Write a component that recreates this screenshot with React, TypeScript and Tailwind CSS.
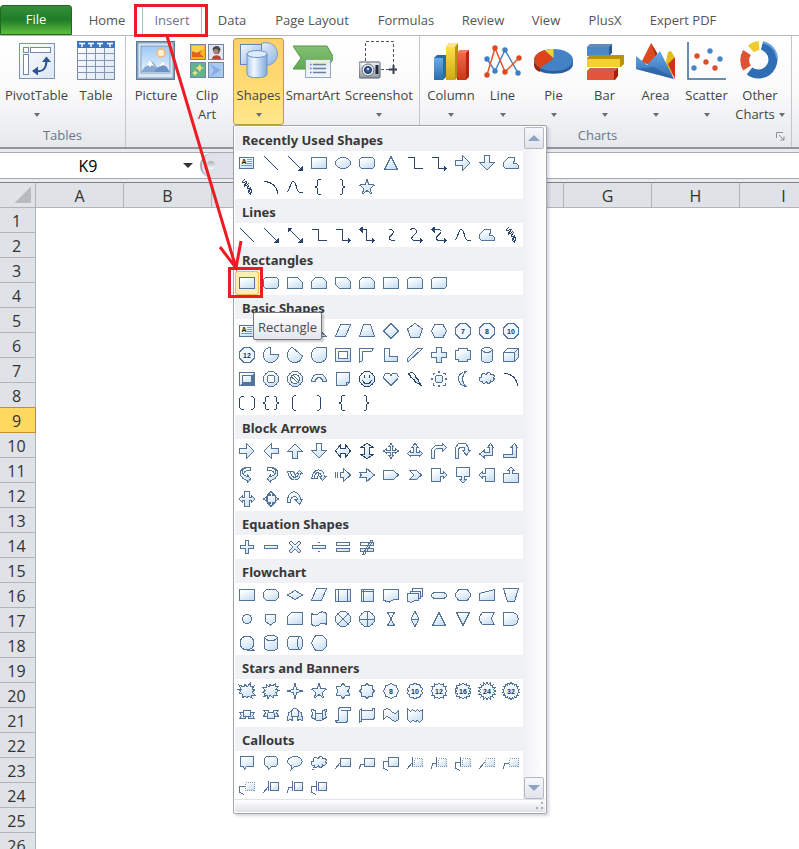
import React from 'react';

/* ---------- geometry helpers for the 24 x 24 shape thumbnails ---------- */

function starPath(points: number, outer: number, inner: number, cx = 12, cy = 12): string {
  let d = '';
  for (let i = 0; i < points * 2; i++) {
    const r = i % 2 === 0 ? outer : inner;
    const a = (Math.PI * i) / points - Math.PI / 2;
    d += `${i === 0 ? 'M' : 'L'}${(cx + r * Math.cos(a)).toFixed(2)} ${(cy + r * Math.sin(a)).toFixed(2)}`;
  }
  return d + 'z';
}

function circlePath(r: number, cx = 12, cy = 12, ry = r): string {
  return `M${cx - r} ${cy}a${r} ${ry} 0 1 0 ${r * 2} 0a${r} ${ry} 0 1 0 ${-r * 2} 0z`;
}

type Shape = {
  name: string;
  d?: string;
  line?: string;
  solid?: string;
  text?: string;
  dark?: boolean;
};

const s = (name: string, d: string, line?: string, more: Partial<Shape> = {}): Shape => ({ name, d, line, ...more });
const l = (name: string, line: string, solid?: string): Shape => ({ name, line, solid, dark: true });

const RECT = 'M4.5 6.5h15v11h-15z';
const ROUND = 'M6.5 6.5h11l2 2v7l-2 2h-11l-2-2v-7z';
const OCTAGON = 'M9 4.5h6l4.500 4.500v6l-4.500 4.500h-6l-4.500-4.500v-6z';
const CLOUD =
  'M7.500 14.500c-4 1-4-4-1-4.500c-1-4 3-4 4.500-2.500c2-3 4-2 5 0c4 0 4 2 2.500 3c2 3-1 4-3 3.500c0 3-3 3-4 1c-2 2-4 2-4-.5z';
const HEAD_RIGHT = 'M17 14.500l3.500 3l-3.500 3z';
const HEAD_LEFT = 'M7.500 3.500l-3.500 3l3.500 3z';
const SCRIBBLE =
  'M9.500 4.500c-2 2-3 3-1.500 3.500s3-3 4-1.500s-4 3.500-2.500 4.500s3.500-3.500 4.500-2s-3 3.500-1.500 4.500s3-2 3.500-.5s-3 2-2.500 4s3 1 3-1s-3-2-2 0s1 2 1 3.500';
const FREEFORM = 'M9.500 6.500h6v4h-1.500v2h3.500l2 2v3h-13l-2-2v-4z';

const textBox: Shape = {
  name: 'Text Box',
  d: 'M4.500 6.500h14v11h-14z',
  line: 'M12 8.500h5M12 10.500h5M12 12.500h5M6 14.500h11',
  text: 'box',
};
const line = l('Line', 'M5 5L19 19');
const arrow = l('Arrow', 'M5 5L18 18', 'M19.500 19.500v-5l-5 5z');
const doubleArrow = l('Double Arrow', 'M6 6L18 18', 'M19.500 19.500v-5l-5 5zM4.500 4.500v5l5-5z');
const elbow = l('Elbow Connector', 'M4.500 6.500h7v11h8');
const elbowArrow = l('Elbow Arrow Connector', 'M4.500 6.500h7v11h6', HEAD_RIGHT);
const elbowDouble = l('Elbow Double-Arrow Connector', 'M7 6.500h4.500v11h6', HEAD_RIGHT + HEAD_LEFT);
const curve = l('Curve', 'M4 16.500c3 0 3-10 6-10c4 0 3 11 7 11h3');
const arc = l('Arc', 'M5 6.500c7 0 12 4 14 12');
const leftBrace = l('Left Brace', 'M13.500 4.500h-2l-1 1v5l-2 1.500l2 1.500v5l1 1h2');
const rightBrace = l('Right Brace', 'M8.500 4.500h2l1 1v5l2 1.500l-2 1.500v5l-1 1h-2');
const freeform = s('Freeform', FREEFORM);
const scribble = l('Scribble', SCRIBBLE);
const rightArrow = s('Right Arrow', 'M4.500 9.500h7v-5l7.500 7.500l-7.500 7.500v-5h-7z');
const downArrow = s('Down Arrow', 'M9.500 4.500h5v7h5l-7.500 7.500l-7.500-7.500h5z');
const star5 = s('5-Point Star', starPath(5, 8, 3.2, 12, 12.5));
const rectangle = s('Rectangle', RECT);
const rounded = s('Rounded Rectangle', ROUND);
const triangle = s('Isosceles Triangle', 'M12 5.500l6.500 13h-13z');

const curly = 'M7.500 6.500c5-3 8 2 4 5c-4 3-3 6 1 6';

const sections: { title: string; shapes: Shape[] }[] = [
  {
    title: 'Recently Used Shapes',
    shapes: [
      textBox, line, arrow, rectangle, s('Oval', circlePath(7.5, 12, 12, 5.5)), rounded, triangle, elbow, elbowArrow,
      rightArrow, downArrow, freeform, scribble, arc, curve, leftBrace, rightBrace, star5,
    ],
  },
  {
    title: 'Lines',
    shapes: [
      line, arrow, doubleArrow, elbow, elbowArrow, elbowDouble,
      l('Curved Connector', 'M9.500 6.500c6 0 6 3 3 5.500c-4 3-3 5.500 3 5.500'),
      l('Curved Arrow Connector', curly + 'h4', HEAD_RIGHT),
      l('Curved Double-Arrow Connector', 'M7 6.500c7-1 9 2 5 5c-4 3-3 6 1 6h4', HEAD_RIGHT + HEAD_LEFT),
      curve, freeform, scribble,
    ],
  },
  {
    title: 'Rectangles',
    shapes: [
      rectangle, rounded,
      s('Snip Single Corner Rectangle', 'M4.500 6.500h10l5 5v6h-15z'),
      s('Snip Same Side Corner Rectangle', 'M8.500 6.500h7l4 4v7h-15v-7z'),
      s('Snip Diagonal Corner Rectangle', 'M4.500 6.500h11l4 4v7h-11l-4-4z'),
      s('Snip and Round Single Corner Rectangle', 'M7.500 6.500h8l4 4v7h-15v-8z'),
      s('Round Single Corner Rectangle', 'M4.500 6.500h13l2 2v9h-15z'),
      s('Round Same Side Corner Rectangle', 'M6.500 6.500h11l2 2v9h-15v-9z'),
      s('Round Diagonal Corner Rectangle', 'M6.500 6.500h13v9l-2 2h-13v-9z'),
    ],
  },
  {
    title: 'Basic Shapes',
    shapes: [
      textBox, s('Oval', circlePath(7.5, 12, 12, 5.5)), triangle, s('Right Triangle', 'M5.500 5.500l14 12h-14z'),
      s('Parallelogram', 'M9.500 5.500h10l-5 12h-10z'),
      s('Trapezoid', 'M8.500 5.500h7l4 12h-15z'),
      s('Diamond', 'M12 4.500l7.500 7.500l-7.500 7.500l-7.500-7.500z'),
      s('Regular Pentagon', 'M12 4.500l7.500 5.500l-3 8.500h-9l-3-8.500z'),
      s('Hexagon', 'M8 5.500h8l3.500 6.500l-3.500 6.500h-8l-3.500-6.500z'),
      s('Heptagon', OCTAGON, undefined, { text: '7' }),
      s('Octagon', OCTAGON, undefined, { text: '8' }),
      s('Decagon', OCTAGON, undefined, { text: '10' }),
      s('Dodecagon', OCTAGON, undefined, { text: '12' }),
      s('Pie', 'M11.500 4.500v7h8c0 5-4 8-8 8s-7-3-7-7.500s3-7.500 7-7.500z'),
      s('Chord', 'M9.500 4.500l10 8.500c-1 4-4 6.500-8 6.500s-7-3-7-7.500c0-3 2-7 5-7.500z'),
      s('Teardrop', 'M19.500 4.500v8c0 4-3 7-7.500 7s-7.500-3-7.500-7.500s3-7.500 7.500-7.500z'),
      s('Frame', 'M4.500 5.500h15v13h-15zM7.500 8.500h9v7h-9z'),
      s('Half Frame', 'M4.500 5.500h14l-2 3h-9v9l-3 2z'),
      s('L-Shape', 'M5.500 5.500h5v8h8v5h-13z'),
      s('Diagonal Stripe', 'M14.500 5.500h5l-14 13h-1v-3z'),
      s('Cross', 'M9.500 4.500h5v5h5v5h-5v5h-5v-5h-5v-5h5z'),
      s('Plaque', 'M7.500 5.500h9v2h3v9h-3v2h-9v-2h-3v-9h3z'),
      s('Can', 'M6.500 6.500l3-2h5l3 2v11l-3 2h-5l-3-2z', 'M6.500 7l3 2h5l3-2'),
      s('Cube', 'M4.500 9.500l4-4h11v9l-4 4h-11z', 'M4.500 9.500h11v9M15.500 9.500l4-4'),
      s('Bevel', 'M4.500 5.500h15v13h-15z', 'M7.500 8.500h9v7h-9z', { solid: 'M20 5v14H4l3-3h10V8z' }),
      s('Donut', circlePath(7.5) + circlePath(4)),
      s('No Symbol', circlePath(7.5) + circlePath(4.5), 'M8 9.500l6.500 6M10 8l6 6'),
      s('Block Arc', 'M4.500 14.500c0-10 15-10 15 0h-4c0-5-7-5-7 0z'),
      s('Folded Corner', 'M5.500 5.500h13v10l-3 3h-10z', 'M15.500 18.500v-3h3'),
      s('Smiley Face', circlePath(7.5), 'M9.500 8v3M14.500 8v3M7.500 13.500l2 2.500h5l2-2.500', { dark: true }),
      s('Heart', 'M12 18.500l-7-7c-1-7 6-6 7-3c1-3 8-4 7 3z'),
      s('Lightning Bolt', 'M5 7l4-2l4 4l-1 1l4 3l-1 1l4 5l-8-5l1-1l-5-3l1-1z', undefined, { dark: true }),
      s('Sun', circlePath(4), 'M11 5.500l1-1l1 1M11 18.500l1 1l1-1M5.500 11l-1 1l1 1M18.500 11l1 1l-1 1M6 8v-2h2M16 6h2v2M6 16v2h2M16 18h2v-2'),
      s('Moon', 'M15.500 4.500c-5 3-5 12 0 15c-10 0-11-15 0-15z'),
      s('Cloud', CLOUD), arc,
      l('Double Bracket', 'M8.500 5.500h-2l-2 2v9l2 2h2M15.500 5.500h2l2 2v9l-2 2h-2'),
      l('Double Brace', 'M9.500 5.500h-2l-1 1v4l-2 1.500l2 1.500v4l1 1h2M14.500 5.500h2l1 1v4l2 1.500l-2 1.500v4l-1 1h-2'),
      l('Left Bracket', 'M13 4.500h-1.500l-2 2v11l2 2h1.500'),
      l('Right Bracket', 'M10 4.500h1.500l2 2v11l-2 2h-1.500'),
      leftBrace, rightBrace,
    ],
  },
  {
    title: 'Block Arrows',
    shapes: [
      rightArrow,
      s('Left Arrow', 'M19.500 9.500h-7v-5l-7.500 7.500l7.500 7.500v-5h7z'),
      s('Up Arrow', 'M9.500 19.500h5v-7h5l-7.500-7.500l-7.500 7.500h5z'),
      downArrow,
      s('Left-Right Arrow', 'M4.500 12l5-6.500v4h5v-4l5 6.500l-5 6.500v-4h-5v4z', undefined, { dark: true }),
      s('Up-Down Arrow', 'M12 4.500l6.500 4h-4v7h4l-6.500 4l-6.500-4h4v-7h-4z', undefined, { dark: true }),
      s('Quad Arrow', 'M12 4.500l2.500 3h-1.500v3.500h3.500v-1.500l3 2.500l-3 2.500v-1.500h-3.500v3.500h1.500l-2.500 3l-2.500-3h1.500v-3.500h-3.500v1.500l-3-2.500l3-2.500v1.500h3.500v-3.500h-1.500z'),
      s('Left-Right-Up Arrow', 'M12 4.500l3.500 4h-2v5h3v-2l3 3l-3 3v-1h-9v1l-3-3l3-3v2h3v-5h-2z'),
      s('Bent Arrow', 'M4.500 19.500v-9l4-4h7v-2l4 4l-4 4v-3h-6l-2 2v8z'),
      s('U-Turn Arrow', 'M4.500 19.500v-11l3-4h7l3 4v3h2l-4 4.500l-4-4.500h2v-3h-4l-2 1v10z'),
      s('Left-Up Arrow', 'M15.500 4.500l3 4h-1.500v8h-8v2l-4.500-3.500l4.500-3.500v2h5v-5h-1.500z'),
      s('Bent-Up Arrow', 'M15.500 4.500l3 4h-1.500v10h-12.500v-3h9v-7h-1.500z'),
      s('Curved Right Arrow', 'M15.500 4.500c-8 0-9 3-8 5c1 3 4 4 5 4v-2l3 4.500l-3 3.500v-2c-8-1-11-13 0-13h3v3c-4 0-6 1-6.500 2'),
      s('Curved Left Arrow', 'M8.500 4.500c8 0 9 3 8 5c-1 3-4 4-5 4v-2l-3 4.500l3 3.500v-2c8-1 11-13 0-13h-3v3c4 0 6 1 6.500 2'),
      s('Curved Up Arrow', 'M4.500 8.500h3c0 4 3 6 5 6c2-1 3-2 3-4h-2l3-3l3 3h-2c-1 9-11 9-13-2zM7.500 8.500h3l3 6'),
      s('Curved Down Arrow', 'M4.500 15.500h3c0-4 2-6 4-6c2 1 3 2 3 4h-2l3 4l4-4h-2c-1-9-11-9-13 2zM8 15.500h2l2-5'),
      s('Striped Right Arrow', 'M9.500 9.500h3v-4l7 6.500l-7 6.500v-4h-3z', 'M4.500 9v6M6.500 9v6'),
      s('Notched Right Arrow', 'M4.500 9.500h7v-4l8 6.500l-8 6.500v-4h-7l2-2.500z'),
      s('Pentagon', 'M4.500 7.500h10l5 4.500l-5 4.500h-10z'),
      s('Chevron', 'M6.500 7.500h7l5 4.500l-5 4.500h-7l4.500-4.500z'),
      s('Right Arrow Callout', 'M4.500 5.500h9v5h3v-2l3.500 3.500l-3.500 3.500v-2h-3v5h-9z'),
      s('Down Arrow Callout', 'M5.500 4.500h13v9h-5v3h2l-3.500 3.500l-3.500-3.500h2v-3h-5z'),
      s('Left Arrow Callout', 'M19.500 5.500h-9v5h-3v-2l-3.500 3.500l3.500 3.500v-2h3v5h9z'),
      s('Up Arrow Callout', 'M4.500 19.500h15v-9h-6v-3h2l-3.500-3.500l-3.500 3.500h2v3h-6z'),
      s('Left-Right Arrow Callout', 'M9.500 4.500h5v6h2v-2l3.500 3.500l-3.500 3.500v-2h-2v6h-5v-6h-2v2l-3.500-3.500l3.500-3.500v2h2z'),
      s('Quad Arrow Callout', 'M12 4.500l3 3h-2v1h3v3h.5v-2l3 2.500l-3 2.500v-2h-.5v3h-3v1h2l-3 3l-3-3h2v-1h-3v-3h-.5v2l-3-2.500l3-2.500v2h.5v-3h3v-1h-2z'),
      s('Circular Arrow', 'M4.500 15.500c-1-13 12-14 13-3h2l-3 5l-4.500-5h2.500c-1-5-7-4-7 3z'),
    ],
  },
  {
    title: 'Equation Shapes',
    shapes: [
      s('Plus', 'M10.500 5.500h3v5h5v3h-5v5h-3v-5h-5v-3h5z'),
      s('Minus', 'M5.500 10.500h13v3h-13z'),
      s('Multiply', 'M8 6l4 4l4-4l2 2l-4 4l4 4l-2 2l-4-4l-4 4l-2-2l4-4l-4-4z'),
      s('Division', 'M5.500 10.500h13v3h-13z', 'M11 7.500h2M11 16.500h2'),
      s('Equal', 'M5.500 7.500h13v3h-13zM5.500 13.500h13v3h-13z'),
      s('Not Equal', 'M5.500 7.500h13v3h-13zM5.500 13.500h13v3h-13z', 'M8 19l8-14l2 1l-8 13z'),
    ],
  },
  {
    title: 'Flowchart',
    shapes: [
      rectangle,
      s('Alternate Process', 'M7.500 6.500h9l3 3v5l-3 3h-9l-3-3v-5z'),
      s('Decision', 'M12 7.500l7.500 4.500l-7.500 4.500l-7.500-4.500z'),
      s('Data', 'M9.500 5.500h10l-5 12h-10z'),
      s('Predefined Process', 'M4.500 6.500h15v12h-15z', 'M7.500 6v12M16.500 6v12'),
      s('Internal Storage', 'M6.500 6.500h12v12h-12z', 'M8.500 6v12M6 8.500h12'),
      s('Document', 'M4.500 6.500h15v10h-5l-4 2.500l-6-1.500z'),
      s('Multidocument', 'M9.500 5.500h10v8h-2v2h-2v2h-4l-3 2l-4-1.500v-7.500h3v-2h2z', 'M4.500 10.500h11v7M7.500 8.500h10v7'),
      s('Terminator', 'M7 9.500h10l2.500 2v2l-2.500 2h-10l-2.500-2v-2z'),
      s('Preparation', 'M8 6.500h8l3.500 4v3l-3.500 4h-8l-3.500-4v-3z'),
      s('Manual Input', 'M4.500 10.500l15-4v11h-15z'),
      s('Manual Operation', 'M4.500 5.500h15l-4 13h-7z'),
      s('Connector', circlePath(4.5)),
      s('Off-page Connector', 'M6.500 7.500h10v7l-5 3.500l-5-3.500z'),
      s('Card', 'M8.500 5.500h11v12h-15v-8z'),
      s('Punched Tape', 'M4.500 6.500c3 2 5 2 7 0s5-2 8 0v11c-3-2-5-2-7 0s-5 2-8 0z'),
      s('Summing Junction', circlePath(7.5), 'M7 7l10 10M17 7l-10 10'),
      s('Or', circlePath(7.5), 'M4.500 12h15M12 4.500v15'),
      s('Collate', 'M8.500 5.500h7l-7 13h7z'),
      s('Sort', 'M12 4.500l4 7.500l-4 7.500l-4-7.500z', 'M8 12.500h8'),
      s('Extract', 'M12 5.500l6.500 13h-13z'),
      s('Merge', 'M12 18.500l6.500-13h-13z'),
      s('Stored Data', 'M7.500 5.500h12l-2 3l-1 3l1 3l2 3h-12l-3-4v-4z'),
      s('Delay', 'M4.500 5.500h8c9 0 9 13 0 13h-8z'),
      s('Sequential Access Storage', circlePath(7), 'M12 19.500h8M16 17.500l4 2'),
      s('Magnetic Disk', 'M5.500 6.500l3-2h7l3 2v11l-3 2h-7l-3-2z', 'M5.500 7l3 2h7l3-2'),
      s('Direct Access Storage', 'M6.500 5.500h11l2 3v7l-2 3h-11l-2-3v-7z', 'M16.500 5.500l-2 3v7l2 3'),
      s('Display', 'M8.500 4.500h7l4 4v7l-4 4h-7l-4-7.500z'),
    ],
  },
  {
    title: 'Stars and Banners',
    shapes: [
      s('Explosion 1', 'M12 8l3-3.500v3.500l4-1l-2 3l3 1l-3 2l3 3h-4l1 3l-4-2l-1 2l-2-2l-3 2v-4l-3-1l2-2l-4-2h4l-2-4l5 2l1-3z'),
      s('Explosion 2', 'M13 7l3-2v3l3-.5l-2 3l3 1l-3 2l1 3l-3-.5l-1 2.500l-3-2l-2 3l-1-3l-3 1l1-3l-2-1l2-2l-2-3h3v-3l3 2l1-2z'),
      s('4-Point Star', starPath(4, 8, 2.4)),
      star5,
      s('6-Point Star', starPath(6, 8, 4.8)),
      s('7-Point Star', starPath(8, 8, 5.5)),
      s('8-Point Star', starPath(8, 7.8, 6.6), undefined, { text: '8' }),
      s('10-Point Star', starPath(10, 8, 6.8), undefined, { text: '10' }),
      s('12-Point Star', starPath(12, 8.2, 6.4), undefined, { text: '12' }),
      s('16-Point Star', starPath(14, 8.2, 6.4), undefined, { text: '16' }),
      s('24-Point Star', starPath(16, 8.4, 6.6), undefined, { text: '24' }),
      s('32-Point Star', starPath(18, 8.4, 6.8), undefined, { text: '32' }),
      s('Up Ribbon', 'M8.500 7.500h7v2h4l-2 3l2 3h-6v-2h-3v2h-6l2-3l-2-3h4z', 'M8.500 9v4h7v-4'),
      s('Down Ribbon', 'M4.500 7.500h5v2h5v-2h5l-2 2l2 4h-4v2h-7v-2h-4l2-4z', 'M8.500 15v-5M15.500 15v-5'),
      s('Curved Up Ribbon', 'M8.500 8.500c1-4 6-4 7 0l3 1l1 8l-3-1l-2 1v-4h-5v4l-2-1l-3 1l1-8z', 'M8.500 8v6M15.500 8v6'),
      s('Curved Down Ribbon', 'M4.500 6.500l4 1v3h7v-3l4-1l-1 4l1 4l-4 2c-1 2-6 2-7 0l-4-2l1-4z', 'M8.500 16v-6M15.500 16v-6'),
      s('Vertical Scroll', 'M8.500 4.500h11v3h-3v11l-2 1h-9l-1-2h3v-11z', 'M9.500 7.500h7'),
      s('Horizontal Scroll', 'M4.500 7.500l2-2v2h11v-2h2v9l-1 2h-12v2l-2 .5z', 'M6.500 7.500v9'),
      s('Wave', 'M4.500 7.500c3-3 5-2 8 1s5 2 7-1v9c-3 3-5 2-8-1s-5-2-7 1z'),
      s('Double Wave', 'M4.500 5.500l3 3l2-2l3 2l2-2l2 2l3-2v10l-3 3l-2-2l-2 1l-3-1l-2 2l-3-3z'),
    ],
  },
  {
    title: 'Callouts',
    shapes: [
      s('Rectangular Callout', 'M5.500 5.500h13v10h-7l-2 3l-1-3h-3z'),
      s('Rounded Rectangular Callout', 'M7.500 5.500h9l2 2v6l-2 2h-4l-3 3l-1-3h-1l-2-2v-6z'),
      s('Oval Callout', 'M12 5.500c10 0 9 10 0 10l-4 3v-4c-6-3-3-9 4-9z'),
      s('Cloud Callout', CLOUD, 'M6 16.500h2M5 18.500h2'),
      s('Line Callout 1', 'M9.500 7.500h10v8h-10z', 'M4 18l5-6'),
      s('Line Callout 2', 'M9.500 7.500h10v8h-10z', 'M4 18l2-5h3'),
      s('Line Callout 3', 'M9.500 6.500h10v9h-10z', 'M9 10.500h-4.500v7l5 2'),
      s('Line Callout 1 (Accent Bar)', 'M11.500 7.500h8v8h-8z', 'M4 18l5-6M9.500 6v10', { text: 'dots' }),
      s('Line Callout 2 (Accent Bar)', 'M11.500 7.500h8v8h-8z', 'M4 18l2-6h3M9.500 6v10', { text: 'dots' }),
      s('Line Callout 3 (Accent Bar)', 'M11.500 7.500h8v8h-8z', 'M9 11.500h-4.500v6l5 2M9.500 6v10', { text: 'dots' }),
      s('Line Callout 1 (No Border)', 'M10.500 7.500h9v8h-9z', 'M4 18l6-7', { text: 'dots' }),
      s('Line Callout 2 (No Border)', 'M10.500 7.500h9v8h-9z', 'M4 18l2-6h4', { text: 'dots' }),
      s('Line Callout 3 (No Border)', 'M10.500 7.500h9v8h-9z', 'M10 11.500h-5.500v6l5 2', { text: 'dots' }),
      s('Line Callout 1 (Border and Accent Bar)', 'M11.500 7.500h8v8h-8z', 'M4 18l5-6M9.500 6v10'),
      s('Line Callout 2 (Border and Accent Bar)', 'M11.500 7.500h8v8h-8z', 'M4 18l2-6h3M9.500 6v10'),
      s('Line Callout 3 (Border and Accent Bar)', 'M11.500 7.500h8v8h-8z', 'M9 11.500h-4.500v6l5 2M9.500 6v10'),
    ],
  },
];

function ShapeGlyph({ shape }: { shape: Shape }) {
  const stroke = shape.dark ? '#2b456f' : '#547399';
  const dots = shape.text === 'dots';
  const box = shape.text === 'box';
  const label = shape.text && !box && !dots ? shape.text : null;
  return (
    <svg viewBox="0 0 24 24" className="block size-6" fill="none" stroke={stroke} shapeRendering="crispEdges" aria-hidden="true">
      {shape.d && (
        <path
          d={shape.d}
          fill={label ? '#f1f7fd' : 'url(#shapeFill)'}
          fillRule="evenodd"
          stroke={dots ? '#8298b5' : stroke}
          strokeDasharray={dots ? '1 1' : undefined}
        />
      )}
      {shape.line && <path d={shape.line} stroke={box ? '#7d9fcb' : stroke} />}
      {shape.solid && <path d={shape.solid} fill={stroke} stroke="none" />}
      {label && (
        <text x="12" y="15" textAnchor="middle" stroke="none" fill="#16345f" className="font-['Liberation_Sans',sans-serif] text-[7px] font-bold">
          {label}
        </text>
      )}
      {box && (
        <text x="9" y="13" textAnchor="middle" stroke="none" fill="#111827" className="font-['Liberation_Sans',sans-serif] text-[7px] font-bold">
          A
        </text>
      )}
    </svg>
  );
}

/* ---------- large ribbon icons, 40 x 40 ---------- */

function Big({ children }: { children: React.ReactNode }) {
  return (
    <svg viewBox="0 0 40 40" className="block size-10 shrink-0" aria-hidden="true">
      {children}
    </svg>
  );
}

const PivotIcon = () => (
  <Big>
    <rect x="2.500" y="3.500" width="35" height="35" fill="url(#paper)" stroke="#7b93b8" />
    <g fill="#fff" stroke="#7189b0">
      <rect x="6.500" y="7.500" width="5" height="5" />
      <rect x="13.500" y="7.500" width="20" height="5" />
      <rect x="6.500" y="14.500" width="5" height="20" />
    </g>
    <path d="M20 31c7 1 9.500-4 9.500-11" fill="none" stroke="#2f5492" strokeWidth="2" />
    <path d="M25 22l4.500-5.500l4.500 5.500zM21 26.500v9l-6-4.500z" fill="#2f5492" />
  </Big>
);

const TableIcon = () => (
  <Big>
    <rect x="1.500" y="1.500" width="37" height="38" fill="url(#paper)" stroke="#7c8ca6" />
    <rect x="1" y="1" width="38" height="7" fill="#3b76c4" />
    <path d="M3 3.500h6M12 3.500h6M21 3.500h6M31 3.500h6M6 4v3M15 4v3M24 4v3M34 4v3" stroke="#fff" strokeWidth="1.500" />
    <path d="M1 13.500h38M1 20.500h38M1 26.500h38M1 32.500h38M10.500 8v31M19.500 8v31M28.500 8v31" stroke="#8496b2" />
  </Big>
);

const PictureIcon = () => (
  <Big>
    <rect x=".5" y="1.500" width="38" height="38" fill="#8aa5bf" stroke="#5c7a98" />
    <rect x="2.500" y="3.500" width="34" height="34" fill="#dbe7f3" />
    <rect x="5" y="6" width="29" height="27" fill="url(#sky)" stroke="#7c9fc4" />
    <circle cx="25" cy="13" r="4" fill="#fff0d0" stroke="#f7b36c" strokeWidth="1.500" />
    <path d="M5 32l9-12l4 3l6 9z" fill="#86a7d2" />
    <path d="M18 32l9-11l7 11z" fill="#6c92c5" />
    <path d="M9 27l5-7l5 7l-3-2l-2 2l-2-2zM22 27l5-6l4 6l-3-2z" fill="#fff" />
  </Big>
);

const ClipArtIcon = () => (
  <Big>
    <g stroke="#71869f">
      <rect x="3.500" y="4.500" width="15" height="15" fill="#f8b327" />
      <rect x="21.500" y="4.500" width="15" height="15" fill="#dfe6ee" />
      <rect x="3.500" y="22.500" width="15" height="15" fill="#63b38e" />
      <rect x="21.500" y="22.500" width="15" height="15" fill="#a9c9f0" />
    </g>
    <path d="M5 17v-6c3 2 6 2 10-2l-2 5l4 3z" fill="#e0611c" />
    <path d="M5 6h12v3l-7 4l-5-2z" fill="#ffdf5a" opacity=".7" />
    <path d="M25.500 9c1-4 8-4 8 1l-2 4h-4z" fill="#4a4a4a" />
    <circle cx="29" cy="11.500" r="2.500" fill="#a98674" />
    <path d="M25 19c0-5 9-5 9 0z" fill="#c3402a" />
    <path d="M11 27l2-3l1 3l3 1l-3 1l-1 3l-2-3l-3-1zM7 32l1-2l1 2l2 1l-2 1l-1 2l-1-2l-2-1z" fill="#f6e57c" />
    <path d="M23 24l11 6l-11 7l4-7z" fill="#6f9be0" opacity=".6" />
  </Big>
);

const ShapesIcon = () => (
  <Big>
    <circle cx="27" cy="14" r="11.500" fill="url(#blueGlass)" stroke="#7b9cca" />
    <rect x="1.500" y="4.500" width="21" height="20" fill="url(#blueGlass)" stroke="#5e83b5" />
    <path d="M8 14v20c0 5 20 5 20 0V14z" fill="url(#cylinder)" stroke="#6f95c8" />
    <ellipse cx="18" cy="14" rx="10" ry="3.500" fill="#dfebfa" stroke="#6f95c8" />
  </Big>
);

const SmartArtIcon = () => (
  <Big>
    <path d="M0 6h34l7 12l-8 11H0l8-11z" fill="url(#green)" stroke="#569447" />
    <rect x="12.500" y="19.500" width="25" height="18" fill="#eef4fa" stroke="#8ba0bd" opacity=".92" />
    <path d="M20 24.500h13M20 28.500h13M20 32.500h13M17 24.500h1.500M17 28.500h1.500M17 32.500h1.500" stroke="#6980a2" strokeWidth="1.500" />
  </Big>
);

const ScreenshotIcon = () => (
  <Big>
    <path d="M6.500 21V1.500h28V26M22 29.500h8" fill="none" stroke="#4b5563" strokeDasharray="3 2" />
    <path d="M34.500 25v9M30 29.500h8" stroke="#374151" strokeWidth="2" />
    <rect x="0" y="22" width="21" height="16" rx="1" fill="url(#metal)" stroke="#555f6b" />
    <rect x="3" y="23" width="4" height="2" fill="#fff" />
    <rect x="16.500" y="25" width="3" height="9" fill="#1f2937" />
    <circle cx="9" cy="30" r="6" fill="#e5e9ee" stroke="#6b7280" />
    <circle cx="9" cy="30" r="3.500" fill="#315b92" stroke="#1b2d48" />
    <circle cx="9" cy="29" r="1.200" fill="#b8d8ff" />
  </Big>
);

const ColumnIcon = () => (
  <Big>
    <path d="M3 18l3-3h9v22l-3 3H3z" fill="#2f67ab" />
    <path d="M3 18h9v22H3z" fill="url(#barBlue)" />
    <path d="M15 7l3-4h9v34l-3 3h-9z" fill="#b5920b" />
    <path d="M15 7h9v33h-9z" fill="url(#barYellow)" />
    <path d="M15 7l3-4h9l-3 4z" fill="#ffe873" />
    <path d="M26 13l3-3h9v27l-3 3h-9z" fill="#b3260f" />
    <path d="M26 13h9v27h-9z" fill="url(#barRed)" />
    <path d="M26 13l3-3h9l-3 3z" fill="#f27d5c" />
  </Big>
);

const LineIcon = () => (
  <Big>
    <path d="M4 19l8 12l10-21l13 23" fill="none" stroke="#4a86c6" strokeWidth="1.500" />
    <path d="M4 35L12 8l10 24l14-14" fill="none" stroke="#e0572f" strokeWidth="1.500" />
    <g fill="#3f7fc6">
      <circle cx="4" cy="19" r="2.700" /><circle cx="12" cy="31" r="2.700" /><circle cx="22" cy="10" r="2.700" /><circle cx="35" cy="33" r="2.700" />
    </g>
    <g fill="#dc4a20">
      <circle cx="4" cy="35" r="2.700" /><circle cx="12" cy="8" r="2.700" /><circle cx="22" cy="32" r="2.700" /><circle cx="36" cy="18" r="2.700" />
    </g>
  </Big>
);

const PieIcon = () => (
  <Big>
    <path d="M0 20v4c0 13 39 13 39 0v-4z" fill="#2a5e9f" />
    <path d="M0 20v4c0 5 3 7 6 8v-7z" fill="#9f2208" />
    <ellipse cx="19.500" cy="20" rx="19.500" ry="11" fill="#4482c6" />
    <path d="M19.500 19L6 28C-4 21 0 13 11 10z" fill="#dd4318" />
    <path d="M19.500 18L11 10.500c2-1 5-1.500 8.500-1.500z" fill="#f5d233" />
  </Big>
);

const BarIcon = () => (
  <Big>
    <path d="M2 7l3-3h22v9l-3 3H2z" fill="#245a9d" />
    <path d="M2 7h22v9H2z" fill="#4888ce" />
    <path d="M2 18l3-3h34v9l-3 3H2z" fill="#b89408" />
    <path d="M2 19h33v8H2z" fill="#f3d22f" />
    <path d="M2 31l3-3h28v8l-3 4H2z" fill="#a7210a" />
    <path d="M2 31h27v9H2z" fill="#e2553a" />
    <path d="M2 7l3-3h22l-3 3zM2 31l3-3h28l-3 3z" fill="#fff" opacity=".3" />
  </Big>
);

const AreaIcon = () => (
  <Big>
    <path d="M28 30l4-18l3-1l3 5v20z" fill="#e4bd1c" />
    <path d="M32 24l7-7v22z" fill="#c93413" />
    <path d="M5 23L15 3l6 10l4 13z" fill="#dc4b20" />
    <path d="M15 3l6 10l-1 4z" fill="#a72a0c" />
    <path d="M0 16l11 9L24 11l14 28L0 29z" fill="url(#barBlue)" />
    <path d="M0 29L18 27l20 12z" fill="#275b9a" opacity=".6" />
  </Big>
);

const ScatterIcon = () => (
  <Big>
    <path d="M1 2v37h38" fill="none" stroke="#33689f" strokeWidth="1.500" />
    <g fill="#4a86c6">
      <circle cx="23" cy="11" r="2.700" /><circle cx="33" cy="19" r="2.700" /><circle cx="7" cy="28" r="2.700" />
    </g>
    <g fill="#dc4f2b">
      <circle cx="10" cy="16" r="2.700" /><circle cx="19" cy="22" r="2.700" /><circle cx="28" cy="28" r="2.700" />
    </g>
  </Big>
);

const DonutIcon = () => (
  <Big>
    <path d="M22 5.500A14.500 14.500 0 1 1 9.500 31" fill="none" stroke="#2f6eb5" strokeWidth="9" />
    <path d="M23 2.500A17 17 0 0 1 37 18" fill="none" stroke="#6ba6e2" strokeWidth="2" />
    <path d="M7 28A14.500 14.500 0 0 1 7 12.500" fill="none" stroke="#dd5435" strokeWidth="9" />
    <path d="M11 9A14 14 0 0 1 19 5.500" fill="none" stroke="#efcb30" strokeWidth="9" />
  </Big>
);

function SharedPaints() {
  return (
    <svg className="absolute size-0" aria-hidden="true">
      <defs>
        <linearGradient id="shapeFill" x1="0" y1="0" x2="0.6" y2="1"><stop offset=".2" stopColor="#fff" /><stop offset="1" stopColor="#cce1f3" /></linearGradient>
        <linearGradient id="paper" x1="0" y1="0" x2="1" y2="1"><stop offset="0" stopColor="#fff" /><stop offset="1" stopColor="#dbe6f4" /></linearGradient>
        <linearGradient id="sky" x1="0" y1="0" x2="0" y2="1"><stop offset="0" stopColor="#9cc8f5" /><stop offset="1" stopColor="#e9f4fe" /></linearGradient>
        <linearGradient id="blueGlass" x1="0" y1="0" x2="1" y2="1"><stop offset="0" stopColor="#f3f8ff" /><stop offset="1" stopColor="#8db3e3" /></linearGradient>
        <linearGradient id="cylinder" x1="0" y1="0" x2="1" y2="0"><stop offset="0" stopColor="#a9c8ef" /><stop offset=".35" stopColor="#f3f8ff" /><stop offset="1" stopColor="#7fa9de" /></linearGradient>
        <linearGradient id="green" x1="0" y1="0" x2="0" y2="1"><stop offset="0" stopColor="#83c075" /><stop offset="1" stopColor="#5fa951" /></linearGradient>
        <linearGradient id="metal" x1="0" y1="0" x2="0" y2="1"><stop offset="0" stopColor="#eef1f4" /><stop offset="1" stopColor="#8f99a5" /></linearGradient>
        <linearGradient id="barBlue" x1="0" y1="0" x2="0" y2="1"><stop offset="0" stopColor="#69abea" /><stop offset="1" stopColor="#2f69ad" /></linearGradient>
        <linearGradient id="barYellow" x1="0" y1="0" x2="0" y2="1"><stop offset="0" stopColor="#fae04a" /><stop offset="1" stopColor="#cfa814" /></linearGradient>
        <linearGradient id="barRed" x1="0" y1="0" x2="0" y2="1"><stop offset="0" stopColor="#f0694a" /><stop offset="1" stopColor="#cb3515" /></linearGradient>
      </defs>
    </svg>
  );
}

/* ---------- ribbon ---------- */

function Caret() {
  return <span className="block border-x-[3px] border-t-4 border-x-transparent border-t-[#6b6f76]" />;
}

type ToolProps = { icon: React.ReactNode; label: string; second?: string; caret?: boolean; width: string; active?: boolean };

function Tool({ icon, label, second, caret, width, active }: ToolProps) {
  return (
    <button
      type="button"
      className={`flex h-[87px] shrink-0 flex-col items-center rounded-[3px] border pt-px ${width} ${
        active ? 'border-[#c49a3a] bg-gradient-to-b from-[#fbd06a] via-[#ffda70] to-[#ffe88c]' : 'border-transparent'
      }`}
    >
      {icon}
      <span className="mt-[6px] h-[19px] whitespace-nowrap leading-[19px]">{label}</span>
      <span className="flex h-[19px] items-center gap-1 whitespace-nowrap leading-[19px]">
        {second}
        {caret && <Caret />}
      </span>
    </button>
  );
}

function Group({ title, launcher, children }: { title: string; launcher?: boolean; children: React.ReactNode }) {
  return (
    <section className="flex shrink-0 flex-col border-r border-[#c3c7cd] pt-[2px]">
      <div className="flex">{children}</div>
      <div className="flex h-6 items-center">
        <h2 className="flex-1 text-center text-[#6a7686]">{title}</h2>
        {launcher && (
          <button type="button" aria-label="Chart options" className="mr-[6px]">
            <svg viewBox="0 0 10 10" className="size-[10px]" fill="none" stroke="#8a9099">
              <path d="M1.500 7V1.500H8M4 4l5 5M9 5.500V9H5.500" />
            </svg>
          </button>
        )}
      </div>
    </section>
  );
}

function ShapesMenu() {
  return (
    <div className="absolute left-0 top-full z-10 w-[314px] rounded-[2px] border border-[#a0a4ab] bg-white p-px shadow-[2px_2px_3px_rgba(90,95,130,0.25)]">
      <div className="flex">
        <div className="w-72">
          {sections.map((section) => (
            <section key={section.title}>
              <h3 className="h-6 bg-[#f0f1f5] px-[7px] font-['Noto_Sans','Open_Sans',sans-serif] font-bold leading-[26px] text-[#383838]">
                {section.title}
              </h3>
              <div className="flex flex-wrap">
                {section.shapes.map((shape, i) => {
                  const hot = section.title === 'Rectangles' && i === 0;
                  return (
                    <div key={shape.name} className="relative size-6">
                      <button
                        type="button"
                        aria-label={shape.name}
                        className={`block size-6 rounded-[3px] ${hot ? 'bg-[#fdeeb3] shadow-[inset_0_0_0_1px_#f0c040]' : ''}`}
                      >
                        <ShapeGlyph shape={shape} />
                      </button>
                      {hot && (
                        <>
                          <span className="pointer-events-none absolute -left-[7px] -top-1 h-[31px] w-[35px] border-[3px] border-[#ed1c24]" />
                          <span
                            role="tooltip"
                            className="absolute left-[18px] top-[41px] z-10 h-7 rounded-[2px] border border-[#767676] bg-gradient-to-b from-white to-[#e4e5f0] px-1 leading-7 text-[#4c4c4c] shadow-[2px_2px_2px_rgba(0,0,0,0.2)]"
                          >
                            Rectangle
                          </span>
                        </>
                      )}
                    </div>
                  );
                })}
              </div>
            </section>
          ))}
        </div>
        <div className="flex flex-1 flex-col justify-between bg-gradient-to-r from-[#f0f1f4] to-white pl-px pr-px">
          <button type="button" aria-label="Scroll up" className="grid h-[22px] w-5 place-items-center rounded-[2px] border border-[#b4b8c2] bg-gradient-to-b from-[#f6f7fa] to-[#e2e4eb]">
            <span className="border-x-[6px] border-b-[6px] border-x-transparent border-b-[#8fa3c8]" />
          </button>
          <button type="button" aria-label="Scroll down" className="grid h-[22px] w-5 place-items-center rounded-[2px] border border-[#b4b8c2] bg-gradient-to-b from-[#f6f7fa] to-[#e2e4eb]">
            <span className="border-x-[6px] border-t-[6px] border-x-transparent border-t-[#8fa3c8]" />
          </button>
        </div>
      </div>
      <div className="flex h-[13px] items-end justify-end border-t border-[#dde3ea] bg-gradient-to-b from-white to-[#dfe1e6] p-[2px]">
        <svg viewBox="0 0 8 8" className="size-2" fill="#a9adb6" aria-hidden="true">
          <path d="M6 0h2v2H6zM6 5h2v2H6zM1 5h2v2H1z" />
        </svg>
      </div>
    </div>
  );
}

const tabs = [
  { name: 'Home', width: 'w-[70px]' },
  { name: 'Insert', width: 'w-[60px]' },
  { name: 'Data', width: 'w-[60px]' },
  { name: 'Page Layout', width: 'w-[100px]' },
  { name: 'Formulas', width: 'w-[88px]' },
  { name: 'Review', width: 'w-[66px]' },
  { name: 'View', width: 'w-[60px]' },
  { name: 'PlusX', width: 'w-[58px]' },
  { name: 'Expert PDF', width: 'w-[98px]' },
];

const columns = 'ABCDEFGHI'.split('');
const rows = Array.from({ length: 26 }, (_, i) => i + 1);

export default function App() {
  return (
    <div className="relative flex h-screen flex-col overflow-hidden bg-white font-['Open_Sans','Noto_Sans',sans-serif] text-[13px] text-[#444]">
      <SharedPaints />
      <nav className="flex h-9 shrink-0 items-end border-b border-[#b6babf] text-[#555]">
        <button type="button" className="h-[30px] w-[72px] rounded-t-[3px] border border-[#1d6b1f] bg-gradient-to-b from-[#358f3a] via-[#1f7d26] to-[#5fbf3f] text-white">
          File
        </button>
        {tabs.map((tab) => (
          <div key={tab.name} className={`relative h-[30px] shrink-0 ${tab.width}`}>
            <button
              type="button"
              className={`size-full whitespace-nowrap pt-[2px] ${tab.name === 'Insert' ? 'border-x border-[#b6babf] text-[#6a7686]' : ''}`}
            >
              {tab.name}
            </button>
            {tab.name === 'Insert' && (
              <span className="pointer-events-none absolute -left-2 -top-px z-10 h-[33px] w-[74px] border-[3px] border-[#ed1c24]" />
            )}
          </div>
        ))}
      </nav>

      <div className="flex h-[113px] shrink-0 border-b-2 border-[#8f959d] bg-gradient-to-b from-white via-[#fafafb] to-[#e6e8eb]">
        <Group title="Tables">
          <Tool width="w-[73px]" icon={<PivotIcon />} label="PivotTable" caret />
          <Tool width="w-[46px]" icon={<TableIcon />} label="Table" />
          <span className="w-[6px]" />
        </Group>
        <Group title="">
          <span className="w-[5px]" />
          <Tool width="w-[50px]" icon={<PictureIcon />} label="Picture" />
          <Tool width="w-[52px]" icon={<ClipArtIcon />} label="Clip" second="Art" />
          <div className="relative">
            <Tool width="w-[51px]" icon={<ShapesIcon />} label="Shapes" caret active />
            <ShapesMenu />
          </div>
          <Tool width="w-[58px]" icon={<SmartArtIcon />} label="SmartArt" />
          <Tool width="w-[74px]" icon={<ScreenshotIcon />} label="Screenshot" caret />
          <span className="w-[3px]" />
        </Group>
        <Group title="Charts" launcher>
          <span className="w-[5px]" />
          <Tool width="w-[52px]" icon={<ColumnIcon />} label="Column" caret />
          <Tool width="w-[51px]" icon={<LineIcon />} label="Line" caret />
          <Tool width="w-[51px]" icon={<PieIcon />} label="Pie" caret />
          <Tool width="w-[51px]" icon={<BarIcon />} label="Bar" caret />
          <Tool width="w-[51px]" icon={<AreaIcon />} label="Area" caret />
          <Tool width="w-[51px]" icon={<ScatterIcon />} label="Scatter" caret />
          <Tool width="w-[56px]" icon={<DonutIcon />} label="Other" second="Charts" caret />
          <span className="w-[3px]" />
        </Group>
      </div>

      <div className="flex h-[33px] shrink-0 bg-[#e9ebf0] py-[3px]">
        <div className="flex w-[200px] items-center border-y border-[#a6abb3] bg-white">
          <input aria-label="Name box" defaultValue="K9" className="w-[176px] bg-transparent text-center text-base text-black outline-none" />
          <span className="ml-[7px] block border-x-[5px] border-t-[5px] border-x-transparent border-t-[#333]" />
        </div>
        <div className="flex w-[34px] border-y border-[#a6abb3] bg-white">
          <span className="flex flex-1 items-start rounded-l-full border-l-2 border-[#a6abb3] bg-[#dfe2e8] pl-[5px] pt-2">
            <span className="size-2 rounded-full bg-gradient-to-b from-[#a9adb5] to-white" />
          </span>
        </div>
        <input aria-label="Formula" className="min-w-0 flex-1 border-y border-[#a6abb3] bg-white px-2 outline-none" />
      </div>

      <div className="min-h-0 flex-1 overflow-hidden">
        <table className="w-[828px] table-fixed border-separate border-spacing-0 text-base leading-[22px] text-[#333]">
          <thead>
            <tr className="h-[26px]">
              <th className="w-9 border-b border-r border-t border-[#b1b5ba] border-t-[#808080] bg-[#dfe2e7] p-0">
                <span className="ml-[15px] block size-4 bg-[linear-gradient(135deg,transparent_50%,#b7babf_50%)]" />
              </th>
              {columns.map((c) => (
                <th key={c} className="border-b border-r border-t border-[#b1b5ba] border-t-[#808080] bg-[#dfe2e7] p-0 pt-[2px] font-normal">
                  {c}
                </th>
              ))}
            </tr>
          </thead>
          <tbody>
            {rows.map((r) => (
              <tr key={r} className="h-[25px]">
                <th
                  className={`border-b border-r p-0 pr-[2px] pt-[2px] font-normal ${
                    r === 9 ? 'border-[#c68f2c] bg-[#ffd85f]' : r === 8 ? 'border-[#b1b5ba] border-b-[#c68f2c] bg-[#dfe2e7]' : 'border-[#b1b5ba] bg-[#dfe2e7]'
                  }`}
                >
                  {r}
                </th>
                <td colSpan={9} className="p-0" />
              </tr>
            ))}
          </tbody>
        </table>
      </div>

      <svg className="pointer-events-none absolute left-0 top-0 z-20 h-[300px] w-[300px]" fill="none" stroke="#ed1c24" strokeWidth="3" aria-hidden="true">
        <path d="M167 36L236 268M220 247L236 268L241 241" />
      </svg>
    </div>
  );
}
